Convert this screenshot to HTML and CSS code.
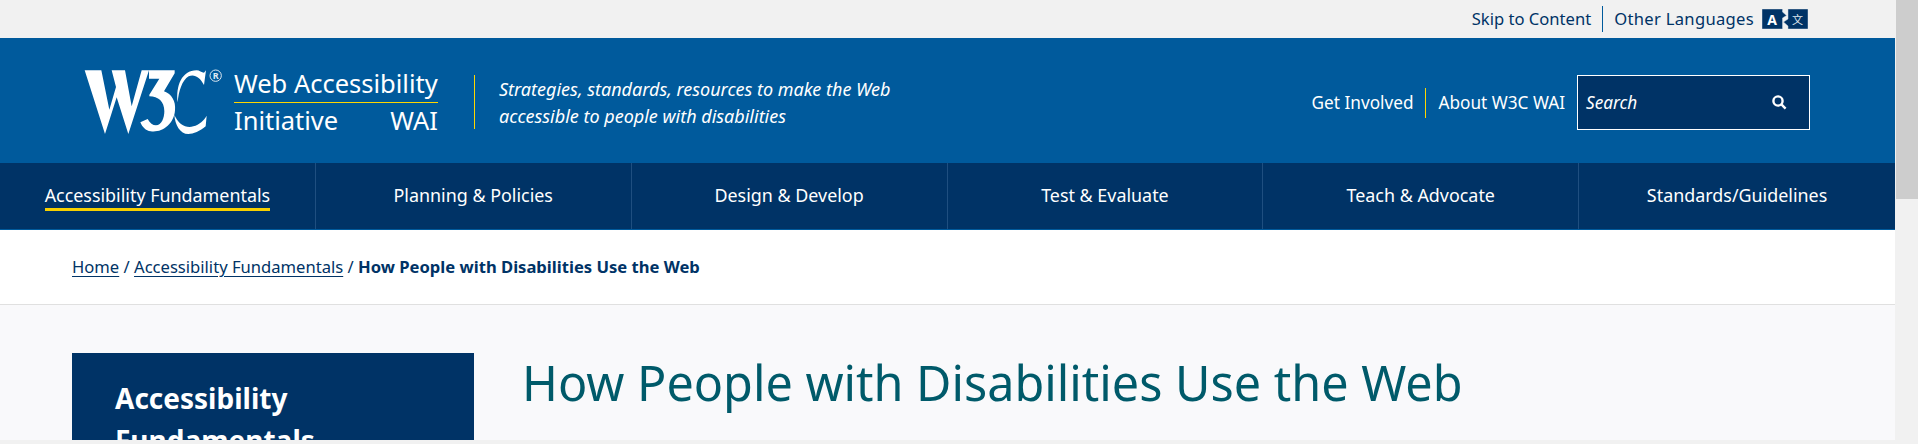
FILE: index.html
```html
<!DOCTYPE html>
<html lang="en">
<head>
<meta charset="utf-8">
<title>How People with Disabilities Use the Web</title>
<link rel="stylesheet" href="styles.css">
</head>
<body>
<div class="window">
  <div class="page">
    <div class="topbar">
      <a class="toplink" href="#">Skip to Content</a>
      <span class="topsep"></span>
      <a class="toplink toplink-lang" href="#">Other Languages</a>
      <svg class="langicon" viewBox="0 0 46 20" width="46" height="20" aria-hidden="true">
        <path class="langpanel" d="M0 0H20.5V3L24.5 6.5L20.5 9V20H0Z"/>
        <path class="langpanel" d="M26 0H46V20H26V17L21.5 13L26 10Z"/>
        <text class="langa" x="10" y="15.5" text-anchor="middle">A</text>
        <text class="langzh" x="35.5" y="14.5" text-anchor="middle">文</text>
      </svg>
    </div>
    <header class="masthead">
      <a class="brand" href="#">
        <svg class="w3c" viewBox="0 0 450 228" width="150" height="76" aria-label="W3C">
          <path class="logofill" d="M14 22H64L88 140L108 72L95 22H135L155 130L185 22H207L145 213L110 103L75 213Z"/>
          <path class="logofill" d="M207 22H284V31L252 85C275 93 288 115 285 142C282 185 245 210 212 205C197 203 187 193 181 178L203 168C210 180 218 187 228 187C245 187 253 165 253 145C253 116 235 100 208 100V95L238 47H207Z"/>
          <path class="logofill" d="M378 22L372 66C360 42 342 32 326 40C306 52 296 85 293 118C287 70 305 22 350 22C358 22 365 29 372 29Z"/>
          <path class="logofill" d="M283 155C295 185 320 197 340 190C358 185 372 172 380 158L377 190C360 205 340 213 325 213C300 213 285 185 283 155Z"/>
          <circle class="logoring" cx="407" cy="38" r="17"/>
          <text class="logoreg" x="407" y="48" text-anchor="middle">R</text>
        </svg>
        <span class="wordmark">
          <span class="wm-top">Web Accessibility</span>
          <span class="wm-bottom"><span>Initiative</span><span>WAI</span></span>
        </span>
      </a>
      <p class="tagline">Strategies, standards, resources to make the Web<br>accessible to people with disabilities</p>
      <div class="headright">
        <a class="headlink" href="#">Get Involved</a>
        <span class="headsep"></span>
        <a class="headlink" href="#">About W3C WAI</a>
        <div class="search">
          <span class="searchtext">Search</span>
          <svg class="searchicon" viewBox="0 0 15 15" width="15" height="15" aria-hidden="true">
            <circle cx="6" cy="6" r="4.6"/>
            <path d="M9.4 9.4L13.6 13.6"/>
          </svg>
        </div>
      </div>
    </header>
    <nav class="mainnav">
      <a class="navitem" href="#"><span class="current">Accessibility Fundamentals</span></a>
      <a class="navitem" href="#">Planning &amp; Policies</a>
      <a class="navitem" href="#">Design &amp; Develop</a>
      <a class="navitem" href="#">Test &amp; Evaluate</a>
      <a class="navitem" href="#">Teach &amp; Advocate</a>
      <a class="navitem" href="#">Standards/Guidelines</a>
    </nav>
    <div class="crumbs">
      <a href="#">Home</a> / <a href="#">Accessibility Fundamentals</a> / <strong>How People with Disabilities Use the Web</strong>
    </div>
    <main class="content">
      <aside class="sidebar"><h2>Accessibility Fundamentals</h2></aside>
      <h1>How People with Disabilities Use the Web</h1>
    </main>
  </div>
  <div class="vscroll"><div class="vthumb"></div></div>
</div>
<div class="hscroll"></div>
</body>
</html>
```
FILE: styles.css
```css
* { box-sizing: border-box; }
html, body { margin: 0; height: 444px; overflow: hidden; }
body { font-family: "Noto Sans", sans-serif; color: #003366; background: #f1f1f1; }
a { color: inherit; text-decoration: none; }

.window { display: flex; height: 440px; }
.page { width: 1895px; height: 440px; overflow: hidden; background: #f9f9fb; }
.vscroll { width: 23px; background: #f1f1f1; }
.vthumb { height: 199px; margin-left: 1px; background: #cdcdcd; }
.hscroll { height: 4px; background: #f1f1f1; }

.topbar { height: 38px; background: #f1f1f1; display: flex; align-items: center; justify-content: flex-end; padding: 0 87px 2px 0; font-size: 16.6px; }
.toplink-lang { letter-spacing: 0.3px; }
.topsep { width: 1px; height: 26px; margin: 2px 11px 0; background: #005a9c; }
.langicon { margin: 2px 0 0 8px; }
.langpanel { fill: #003366; stroke: #c5d3e0; stroke-width: 0.5; }
.langa { fill: #fff; font: 700 14px "Noto Sans", sans-serif; }
.langzh { fill: #dfe6ee; font: 400 11px "Noto Sans CJK SC", sans-serif; }

.masthead { height: 125px; background: #005a9c; color: #fff; display: flex; align-items: center; padding-left: 80px; padding-right: 85px; }
.brand { display: flex; align-items: center; height: 76px; }
.w3c { display: block; margin-top: 1px; }
.logofill { fill: #fff; }
.logoring { fill: none; stroke: #dfe9f2; stroke-width: 3; }
.logoreg { fill: #dfe9f2; font: 700 27px "Noto Sans", sans-serif; }
.wordmark { width: 204px; margin: 1px 0 0 4px; display: flex; flex-direction: column; font-size: 25.5px; line-height: 38px; }
.wm-top { border-bottom: 1px solid #ffd500; white-space: nowrap; }
.wm-bottom { display: flex; justify-content: space-between; margin-top: -2px; }
.tagline { margin: 2px 0 0 36px; padding: 1px 0 0 24px; border-left: 1px solid #ffd500; font-size: 18px; font-style: italic; line-height: 27px; height: 54px; white-space: nowrap; }
.headright { margin-left: auto; display: flex; align-items: center; font-size: 17.2px; padding-top: 4px; }
.headsep { width: 1px; height: 30px; margin: 0 12px; background: #ffd500; }
.search { width: 233px; height: 55px; margin-left: 12px; border: 1px solid #fff; background: #003366; display: flex; align-items: center; justify-content: space-between; padding: 0 22px 0 8px; }
.searchtext { font-style: italic; }
.searchicon circle, .searchicon path { fill: none; stroke: #fff; stroke-width: 2.4; }

.mainnav { height: 67px; background: #003366; border-bottom: 1px solid #005a9c; display: grid; grid-template-columns: repeat(6, 1fr); }
.navitem { display: flex; align-items: center; justify-content: center; color: #fff; font-size: 17.9px; border-right: 1px solid #1f4f80; padding-bottom: 2px; }
.navitem:last-child { border-right: 0; }
.current { border-bottom: 3px solid #f7d000; line-height: 26px; margin-top: 3px; }

.crumbs { height: 75px; line-height: 74px; background: #fff; border-bottom: 1px solid #e0e0e0; padding-left: 72px; font-size: 16.6px; white-space: nowrap; }
.crumbs a { text-decoration: underline; text-underline-offset: 3px; }
.crumbs strong { font-weight: 700; }

.content { display: flex; align-items: flex-start; padding: 48px 0 0 72px; }
.sidebar { width: 402px; height: 200px; background: #003366; color: #fff; padding: 24px 60px 0 43px; }
.sidebar h2 { margin: 0; font-size: 28px; line-height: 42px; font-weight: 700; }
h1 { margin: -3px 0 0 48px; color: #005a6a; font-size: 48.5px; line-height: 64px; font-weight: 400; white-space: nowrap; }
```
